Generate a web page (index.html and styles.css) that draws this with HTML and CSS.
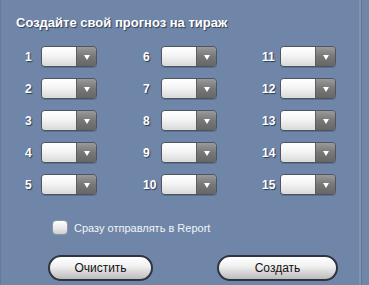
FILE: index.html
```html
<!DOCTYPE html>
<html>
<head>
<meta charset="utf-8">
<link rel="stylesheet" href="styles.css">
</head>
<body>
<div class="panel">
  <div class="title">Создайте свой прогноз на тираж</div>
  <div class="grid">
    <div class="cell c1"><span class="num">1</span><div class="dd"><div class="dd-field"></div><div class="dd-btn"><span class="tri"></span></div></div></div>
    <div class="cell"><span class="num">6</span><div class="dd"><div class="dd-field"></div><div class="dd-btn"><span class="tri"></span></div></div></div>
    <div class="cell"><span class="num">11</span><div class="dd"><div class="dd-field"></div><div class="dd-btn"><span class="tri"></span></div></div></div>
    <div class="cell c1"><span class="num">2</span><div class="dd"><div class="dd-field"></div><div class="dd-btn"><span class="tri"></span></div></div></div>
    <div class="cell"><span class="num">7</span><div class="dd"><div class="dd-field"></div><div class="dd-btn"><span class="tri"></span></div></div></div>
    <div class="cell"><span class="num">12</span><div class="dd"><div class="dd-field"></div><div class="dd-btn"><span class="tri"></span></div></div></div>
    <div class="cell c1"><span class="num">3</span><div class="dd"><div class="dd-field"></div><div class="dd-btn"><span class="tri"></span></div></div></div>
    <div class="cell"><span class="num">8</span><div class="dd"><div class="dd-field"></div><div class="dd-btn"><span class="tri"></span></div></div></div>
    <div class="cell"><span class="num">13</span><div class="dd"><div class="dd-field"></div><div class="dd-btn"><span class="tri"></span></div></div></div>
    <div class="cell c1"><span class="num">4</span><div class="dd"><div class="dd-field"></div><div class="dd-btn"><span class="tri"></span></div></div></div>
    <div class="cell"><span class="num">9</span><div class="dd"><div class="dd-field"></div><div class="dd-btn"><span class="tri"></span></div></div></div>
    <div class="cell"><span class="num">14</span><div class="dd"><div class="dd-field"></div><div class="dd-btn"><span class="tri"></span></div></div></div>
    <div class="cell c1"><span class="num">5</span><div class="dd"><div class="dd-field"></div><div class="dd-btn"><span class="tri"></span></div></div></div>
    <div class="cell"><span class="num">10</span><div class="dd"><div class="dd-field"></div><div class="dd-btn"><span class="tri"></span></div></div></div>
    <div class="cell"><span class="num">15</span><div class="dd"><div class="dd-field"></div><div class="dd-btn"><span class="tri"></span></div></div></div>
  </div>
  <label class="check"><span class="box"></span><span class="check-text">Сразу отправлять в Report</span></label>
  <div class="buttons">
    <button class="btn btn-clear">Очистить</button>
    <button class="btn btn-create">Создать</button>
  </div>
</div>
</body>
</html>
```
FILE: styles.css
```css
html, body {
  margin: 0;
  padding: 0;
  background: #6f86a8;
}
body {
  width: 369px;
  height: 285px;
  overflow: hidden;
  font-family: "Liberation Sans", Arial, sans-serif;
}
.panel {
  box-sizing: border-box;
  width: 361px;
  height: 285px;
  border-left: 1px solid #647a9c;
  border-right: 2px solid #7f93b3;
  box-shadow: 1px 0 0 #62769a;
  padding-top: 15px;
}
.title {
  margin-left: 15px;
  font-size: 13px;
  font-weight: bold;
  line-height: 16px;
  color: #ffffff;
  text-shadow: 1px 1px 1px #2f3d55;
}
.grid {
  display: grid;
  grid-template-columns: repeat(3, 119px);
  row-gap: 11px;
  margin-top: 15px;
  padding-left: 23px;
}
.cell {
  display: flex;
  align-items: center;
  height: 21px;
}
.num {
  width: 18px;
  font-size: 12px;
  font-weight: bold;
  color: #ffffff;
  text-shadow: 1px 1px 1px #2f3d55;
}
.c1 .num {
  width: 16px;
  padding-left: 1px;
}
.dd {
  display: flex;
  box-sizing: border-box;
  width: 56px;
  height: 21px;
  border: 1px solid #4f5560;
  border-radius: 4px;
  overflow: hidden;
  box-shadow: 0 1px 0 rgba(60, 75, 100, 0.4);
}
.dd-field {
  flex: 1;
  background: linear-gradient(#ffffff, #f4f4f4 45%, #d9d9d9);
}
.dd-btn {
  width: 19px;
  display: flex;
  align-items: center;
  justify-content: center;
  background: linear-gradient(#9a9a9a, #777777 50%, #666666);
  border-left: 1px solid #5e5e5e;
}
.tri {
  width: 0;
  height: 0;
  border-left: 3px solid transparent;
  border-right: 3px solid transparent;
  border-top: 5px solid #ffffff;
  margin-top: 2px;
}
.check {
  display: flex;
  align-items: center;
  margin-top: 25px;
  margin-left: 51px;
  height: 15px;
}
.box {
  box-sizing: border-box;
  width: 16px;
  height: 15px;
  border: 1px solid #8a96a8;
  border-radius: 4px;
  background: linear-gradient(#ffffff, #e6e6e6 60%, #cfcfcf);
}
.check-text {
  margin-left: 6px;
  font-size: 11px;
  color: #f2f4f8;
}
.buttons {
  display: flex;
  margin-top: 20px;
  margin-left: 47px;
}
.btn {
  box-sizing: border-box;
  height: 26px;
  border: 2px solid #2e3440;
  border-radius: 13px;
  background: linear-gradient(#ffffff, #f2f2f2 40%, #d2d2d2 75%, #bcbcbc);
  font-family: "Liberation Sans", Arial, sans-serif;
  font-size: 12px;
  color: #111111;
  padding: 0;
  box-shadow: inset 0 1px 0 #ffffff;
}
.btn-clear {
  width: 105px;
}
.btn-create {
  width: 121px;
  margin-left: 64px;
}
```
